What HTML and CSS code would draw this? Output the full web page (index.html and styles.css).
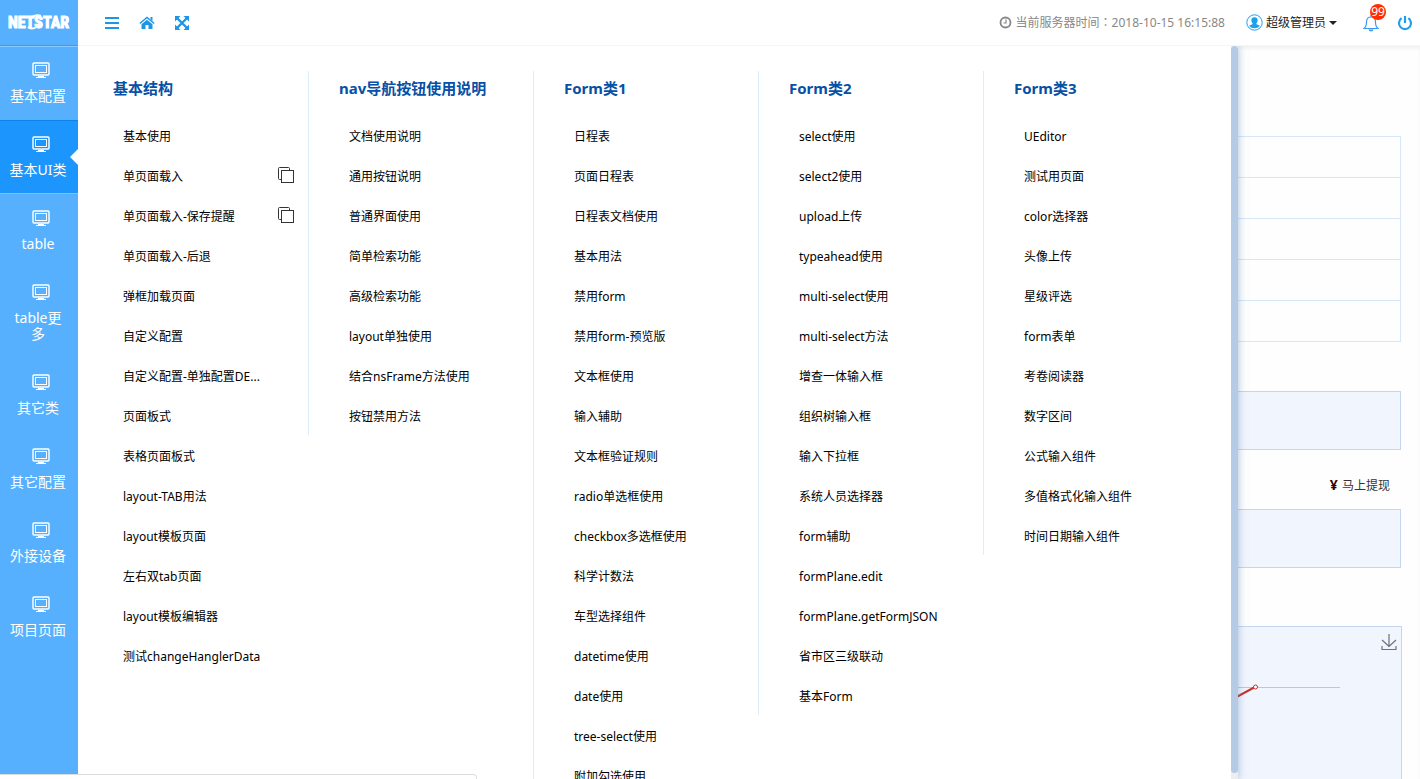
FILE: index.html
```html
<!DOCTYPE html>
<html lang="zh-CN">
<head>
<meta charset="utf-8">
<title>NETSTAR</title>
<link rel="stylesheet" href="styles.css">
</head>
<body>
<svg class="defs" aria-hidden="true">
  <symbol id="monitor" viewBox="0 0 18 18">
    <rect x="1" y="1" width="16" height="12" rx="1" fill="none" stroke="currentColor" stroke-width="1.400"/>
    <rect x="3.500" y="3.500" width="11" height="7" fill="none" stroke="currentColor" stroke-width="1"/>
    <path d="M6 14.500h6M4 15.500h10" stroke="currentColor" stroke-width="1"/>
  </symbol>
  <symbol id="copy" viewBox="0 0 18 18">
    <path d="M4 13.500H2.500a1 1 0 0 1-1-1v-10a1 1 0 0 1 1-1h9a1 1 0 0 1 1 1V4" fill="none" stroke="currentColor"/>
    <rect x="4.500" y="4.500" width="12" height="12" fill="none" stroke="currentColor"/>
  </symbol>
</svg>
<div class="app">
  <aside class="sidebar">
    <a class="logo" href="#">NETSTAR<svg class="swoosh" viewBox="0 0 18 18" aria-hidden="true"><path d="M2 14C5 17 13 15 14 9M15 3C10 1 4 4 5 8" fill="none" stroke="#fff" stroke-width="2"/></svg></a>
    <nav class="side-nav">
      <a href="#"><svg><use href="#monitor"/></svg><span>基本配置</span></a>
      <a href="#" class="active"><svg><use href="#monitor"/></svg><span>基本UI类</span></a>
      <a href="#"><svg><use href="#monitor"/></svg><span>table</span></a>
      <a href="#"><svg><use href="#monitor"/></svg><span>table更多</span></a>
      <a href="#"><svg><use href="#monitor"/></svg><span>其它类</span></a>
      <a href="#"><svg><use href="#monitor"/></svg><span>其它配置</span></a>
      <a href="#"><svg><use href="#monitor"/></svg><span>外接设备</span></a>
      <a href="#"><svg><use href="#monitor"/></svg><span>项目页面</span></a>
    </nav>
  </aside>
  <div class="content">
    <header class="topbar">
      <div class="tools">
        <button type="button" aria-label="菜单"><svg width="15" height="16" viewBox="0 0 15 16"><path d="M0 3h14M0 8h14M0 13h14" stroke="currentColor" stroke-width="2"/></svg></button>
        <button type="button" aria-label="首页"><svg width="16" height="16" viewBox="0 0 16 16"><path d="M8 4.800 2.500 9.300V14h4v-4h3v4h4V9.300z" fill="currentColor"/><path d="M.8 8.500 8 2.500l7.200 6" fill="none" stroke="currentColor" stroke-width="1.500"/><path d="M11.500 2h2v4l-2-1.700z" fill="currentColor"/></svg></button>
        <button type="button" aria-label="全屏"><svg width="16" height="16" viewBox="0 0 16 16"><path d="M3 3l10 10M13 3L3 13" stroke="currentColor" stroke-width="2.400"/><path d="M1 1h5.500L1 6.500zM15 1v5.500L9.500 1zM1 15V9.500L6.500 15zM15 15H9.500L15 9.500z" fill="currentColor"/></svg></button>
      </div>
      <div class="status">
        <span class="clock"><svg width="13" height="13" viewBox="0 0 13 13"><circle cx="6.500" cy="6.500" r="5" fill="none" stroke="currentColor" stroke-width="1.800"/><path d="M7 3.500v3.500H4.500" fill="none" stroke="currentColor" stroke-width="1.200"/></svg><span>当前服务器时间<span class="colon" lang="zh-TW">：</span>2018-10-15 16:15:88</span></span>
        <button type="button" class="user"><svg width="17" height="17" viewBox="0 0 17 17"><circle cx="8.500" cy="8.500" r="7.700" fill="#fff" stroke="#1e9fec"/><path d="M8.500 3.200c2.400 0 3.300 1.600 3.100 3.300-.1 1.400-.7 2.300-1.300 2.900 0 1 1.200 1.200 3.600 2.300A7 7 0 0 1 3.100 11.700c2.400-1.100 3.600-1.300 3.600-2.300-.6-.6-1.200-1.500-1.300-2.900-.2-1.700.7-3.300 3.100-3.300z" fill="#1e9fec"/></svg><span>超级管理员</span><i class="caret"></i></button>
        <button type="button" class="bell" aria-label="通知"><svg width="16" height="18" viewBox="0 0 16 18"><path d="M1 14.500c2-1.500 2.500-3 2.500-6.500C3.500 5 5.200 3 8 3s4.500 2 4.500 5c0 3.500.5 5 2.500 6.500zM8 1v2" fill="none" stroke="#3a9af0" stroke-width="1.200"/><path d="M6 15.500a2 1.500 0 0 0 4 0" fill="#3a9af0" stroke="#3a9af0"/></svg><span class="badge">99</span></button>
        <button type="button" class="power" aria-label="退出"><svg width="16" height="16" viewBox="0 0 16 16"><path d="M4.600 3.200a6 6 0 1 0 6.800 0M8 1v7" fill="none" stroke="currentColor" stroke-width="2.200"/></svg></button>
      </div>
    </header>
    <div class="stage">
      <main class="page">
        <table class="grid"><tbody><tr><td></td></tr><tr><td></td></tr><tr><td></td></tr><tr><td></td></tr><tr><td></td></tr></tbody></table>
        <section class="box"></section>
        <div class="cash"><a href="#"><b>¥</b> 马上提现</a></div>
        <section class="box"></section>
        <section class="chart">
          <svg class="plot" width="170" height="80" viewBox="0 0 170 80"><path d="M0 60.500h109" stroke="#c4c6cc"/><path d="M0 73L24 60" stroke="#c23531" stroke-width="2"/><circle cx="24.500" cy="60" r="2" fill="#fff" stroke="#c23531"/></svg>
          <button type="button" aria-label="下载"><svg width="16" height="17" viewBox="0 0 16 17"><path d="M8 0v12M1 6l7 6.500L15 6M1 12v3.500h14V12" fill="none" stroke="#6f7175" stroke-width="1.200"/></svg></button>
        </section>
      </main>
      <div class="mega">
        <div class="columns">
          <section><h2>基本结构</h2><ul>
            <li><a href="#">基本使用</a></li>
            <li><a href="#">单页面载入</a><svg><use href="#copy"/></svg></li>
            <li><a href="#">单页面载入-保存提醒</a><svg><use href="#copy"/></svg></li>
            <li><a href="#">单页面载入-后退</a></li>
            <li><a href="#">弹框加载页面</a></li>
            <li><a href="#">自定义配置</a></li>
            <li><a href="#">自定义配置-单独配置DE...</a></li>
            <li><a href="#">页面板式</a></li>
            <li><a href="#">表格页面板式</a></li>
            <li><a href="#">layout-TAB用法</a></li>
            <li><a href="#">layout模板页面</a></li>
            <li><a href="#">左右双tab页面</a></li>
            <li><a href="#">layout模板编辑器</a></li>
            <li><a href="#">测试changeHanglerData</a></li>
          </ul></section>
          <section><h2>nav导航按钮使用说明</h2><ul>
            <li><a href="#">文档使用说明</a></li>
            <li><a href="#">通用按钮说明</a></li>
            <li><a href="#">普通界面使用</a></li>
            <li><a href="#">简单检索功能</a></li>
            <li><a href="#">高级检索功能</a></li>
            <li><a href="#">layout单独使用</a></li>
            <li><a href="#">结合nsFrame方法使用</a></li>
            <li><a href="#">按钮禁用方法</a></li>
          </ul></section>
          <section><h2>Form类1</h2><ul>
            <li><a href="#">日程表</a></li>
            <li><a href="#">页面日程表</a></li>
            <li><a href="#">日程表文档使用</a></li>
            <li><a href="#">基本用法</a></li>
            <li><a href="#">禁用form</a></li>
            <li><a href="#">禁用form-预览版</a></li>
            <li><a href="#">文本框使用</a></li>
            <li><a href="#">输入辅助</a></li>
            <li><a href="#">文本框验证规则</a></li>
            <li><a href="#">radio单选框使用</a></li>
            <li><a href="#">checkbox多选框使用</a></li>
            <li><a href="#">科学计数法</a></li>
            <li><a href="#">车型选择组件</a></li>
            <li><a href="#">datetime使用</a></li>
            <li><a href="#">date使用</a></li>
            <li><a href="#">tree-select使用</a></li>
            <li><a href="#">附加勾选使用</a></li>
          </ul></section>
          <section><h2>Form类2</h2><ul>
            <li><a href="#">select使用</a></li>
            <li><a href="#">select2使用</a></li>
            <li><a href="#">upload上传</a></li>
            <li><a href="#">typeahead使用</a></li>
            <li><a href="#">multi-select使用</a></li>
            <li><a href="#">multi-select方法</a></li>
            <li><a href="#">增查一体输入框</a></li>
            <li><a href="#">组织树输入框</a></li>
            <li><a href="#">输入下拉框</a></li>
            <li><a href="#">系统人员选择器</a></li>
            <li><a href="#">form辅助</a></li>
            <li><a href="#">formPlane.edit</a></li>
            <li><a href="#">formPlane.getFormJSON</a></li>
            <li><a href="#">省市区三级联动</a></li>
            <li><a href="#">基本Form</a></li>
          </ul></section>
          <section><h2>Form类3</h2><ul>
            <li><a href="#">UEditor</a></li>
            <li><a href="#">测试用页面</a></li>
            <li><a href="#">color选择器</a></li>
            <li><a href="#">头像上传</a></li>
            <li><a href="#">星级评选</a></li>
            <li><a href="#">form表单</a></li>
            <li><a href="#">考卷阅读器</a></li>
            <li><a href="#">数字区间</a></li>
            <li><a href="#">公式输入组件</a></li>
            <li><a href="#">多值格式化输入组件</a></li>
            <li><a href="#">时间日期输入组件</a></li>
          </ul></section>
        </div>
        <div class="track"><div class="thumb"></div></div>
      </div>
    </div>
  </div>
  <div class="linkbar"></div>
</div>
</body>
</html>
```

FILE: styles.css
```css
* { box-sizing: border-box; }
body {
  margin: 0;
  font: 12px/20px "Noto Sans", "Noto Sans CJK SC", sans-serif;
  color: #000;
  background: #fff;
}
a { color: inherit; text-decoration: none; }
button {
  padding: 0;
  border: 0;
  background: none;
  font: inherit;
  color: inherit;
  display: flex;
  align-items: center;
}
svg { display: block; flex: none; }
.defs { position: absolute; width: 0; height: 0; }

.app { position: relative; display: flex; height: 100vh; overflow: hidden; }

.sidebar { flex: none; width: 78px; background: #56b0fe; color: #fff; }
.logo {
  position: relative;
  display: flex;
  align-items: center;
  height: 46px;
  padding-left: 8px;
  border-bottom: 1px solid #3b9df5;
  font: bold 16px/20px "Liberation Sans Narrow", "Roboto Condensed", "Liberation Sans", sans-serif;
  -webkit-text-stroke: 1px #fff;
}
.swoosh { position: absolute; left: 26px; top: 13px; width: 18px; height: 18px; }
.side-nav { display: flex; flex-direction: column; }
.side-nav a {
  position: relative;
  display: flex;
  flex-direction: column;
  align-items: center;
  gap: 8px;
  padding: 16px 11px 16px 9px;
  font-size: 14px;
  line-height: 16px;
  text-align: center;
}
.side-nav a:first-child { box-shadow: inset 0 1px #8bcaff; }
.side-nav svg { width: 18px; height: 18px; margin-left: 6px; }
.side-nav .active { background: #1c95fd; box-shadow: inset 0 1px #0a83ee, inset 0 -1px #7cc3ff; }
.side-nav .active::after {
  content: "";
  position: absolute;
  right: 0;
  top: 29px;
  border: 8px solid transparent;
  border-right-color: #fff;
  border-left-width: 0;
}

.content { flex: 1; min-width: 0; display: flex; flex-direction: column; }
.topbar {
  flex: none;
  height: 46px;
  display: flex;
  justify-content: space-between;
  align-items: center;
  padding: 0 7px 0 27px;
  border-bottom: 1px solid #f6f6f6;
}
.tools { display: flex; gap: 19px; color: #1e96e8; }
.status { display: flex; align-items: center; }
.clock { display: flex; align-items: center; gap: 4px; color: #888; }
.colon { font-family: "Noto Sans CJK TC", sans-serif; line-height: 1; }
.user { gap: 3px; margin-left: 21px; color: #222; }
.caret { border: 4px solid transparent; border-top-color: #222; border-bottom-width: 0; }
.bell { position: relative; margin-left: 26px; }
.badge {
  position: absolute;
  left: 7px;
  top: -10px;
  width: 16px;
  height: 16px;
  border-radius: 8px;
  background: #ff2d00;
  color: #fff;
  line-height: 16px;
  text-align: center;
}
.power { margin-left: 18px; color: #1e9fec; }

.stage { position: relative; flex: 1; min-height: 0; overflow: hidden; }
.page {
  height: 100%;
  display: flex;
  flex-direction: column;
  padding: 90px 19px 0 20px;
  background: #fefefe;
  box-shadow: inset 0 3px 3px #f3f3f3;
}
.grid { flex: none; width: 100%; border-collapse: collapse; margin-bottom: 49px; }
.grid td { height: 41px; padding: 0; border: 1px solid #d7e7f8; }
.box { flex: none; height: 59px; border: 1px solid #c5d6ee; background: #f1f5fd; }
.cash {
  flex: none;
  height: 59px;
  display: flex;
  align-items: center;
  justify-content: flex-end;
  padding: 12px 11px 0 0;
  color: #333;
}
.cash b { color: #300; font-size: 14px; margin-right: 1px; }
.chart {
  flex: 1 0 160px;
  display: flex;
  justify-content: flex-end;
  align-items: flex-start;
  position: relative;
  margin: 58px -1px 0 0;
  border: 1px solid #c5d6ee;
  background: #f1f5fd;
}
.chart button { position: absolute; right: 4px; top: 7px; }

.mega {
  position: absolute;
  top: 0;
  left: 0;
  bottom: 0;
  width: calc(100% - 182px);
  display: flex;
  background: #fff;
  box-shadow: 0 0 8px rgba(80, 130, 180, .5);
}
.columns {
  flex: 1;
  min-width: 0;
  display: grid;
  grid-template-columns: repeat(5, minmax(0, 1fr));
  align-items: start;
  padding: 25px 23px 0 5px;
  overflow: hidden;
}
.columns section { padding-left: 30px; }
.columns section + section { border-left: 1px solid #dcedfb; }
.columns h2 { margin: 0; font-size: 15px; line-height: 34px; color: #0650a5; white-space: nowrap; }
.columns ul {
  list-style: none;
  margin: 0;
  padding: 22px 13px 8px 10px;
  display: flex;
  flex-direction: column;
  gap: 20px;
}
.columns li { display: flex; justify-content: space-between; white-space: nowrap; }
.columns li svg { width: 18px; height: 18px; margin-top: -1px; color: #333; }
.track { flex: none; width: 7px; padding-bottom: 6px; background: #eee; }
.thumb { height: 100%; border-radius: 4px; background: #b4cae5; }

.linkbar {
  position: absolute;
  left: 0;
  bottom: 0;
  width: 477px;
  height: 5px;
  background: #fff;
  border: 1px solid #ddd;
  border-width: 1px 1px 0 0;
  border-top-right-radius: 4px;
}
```
